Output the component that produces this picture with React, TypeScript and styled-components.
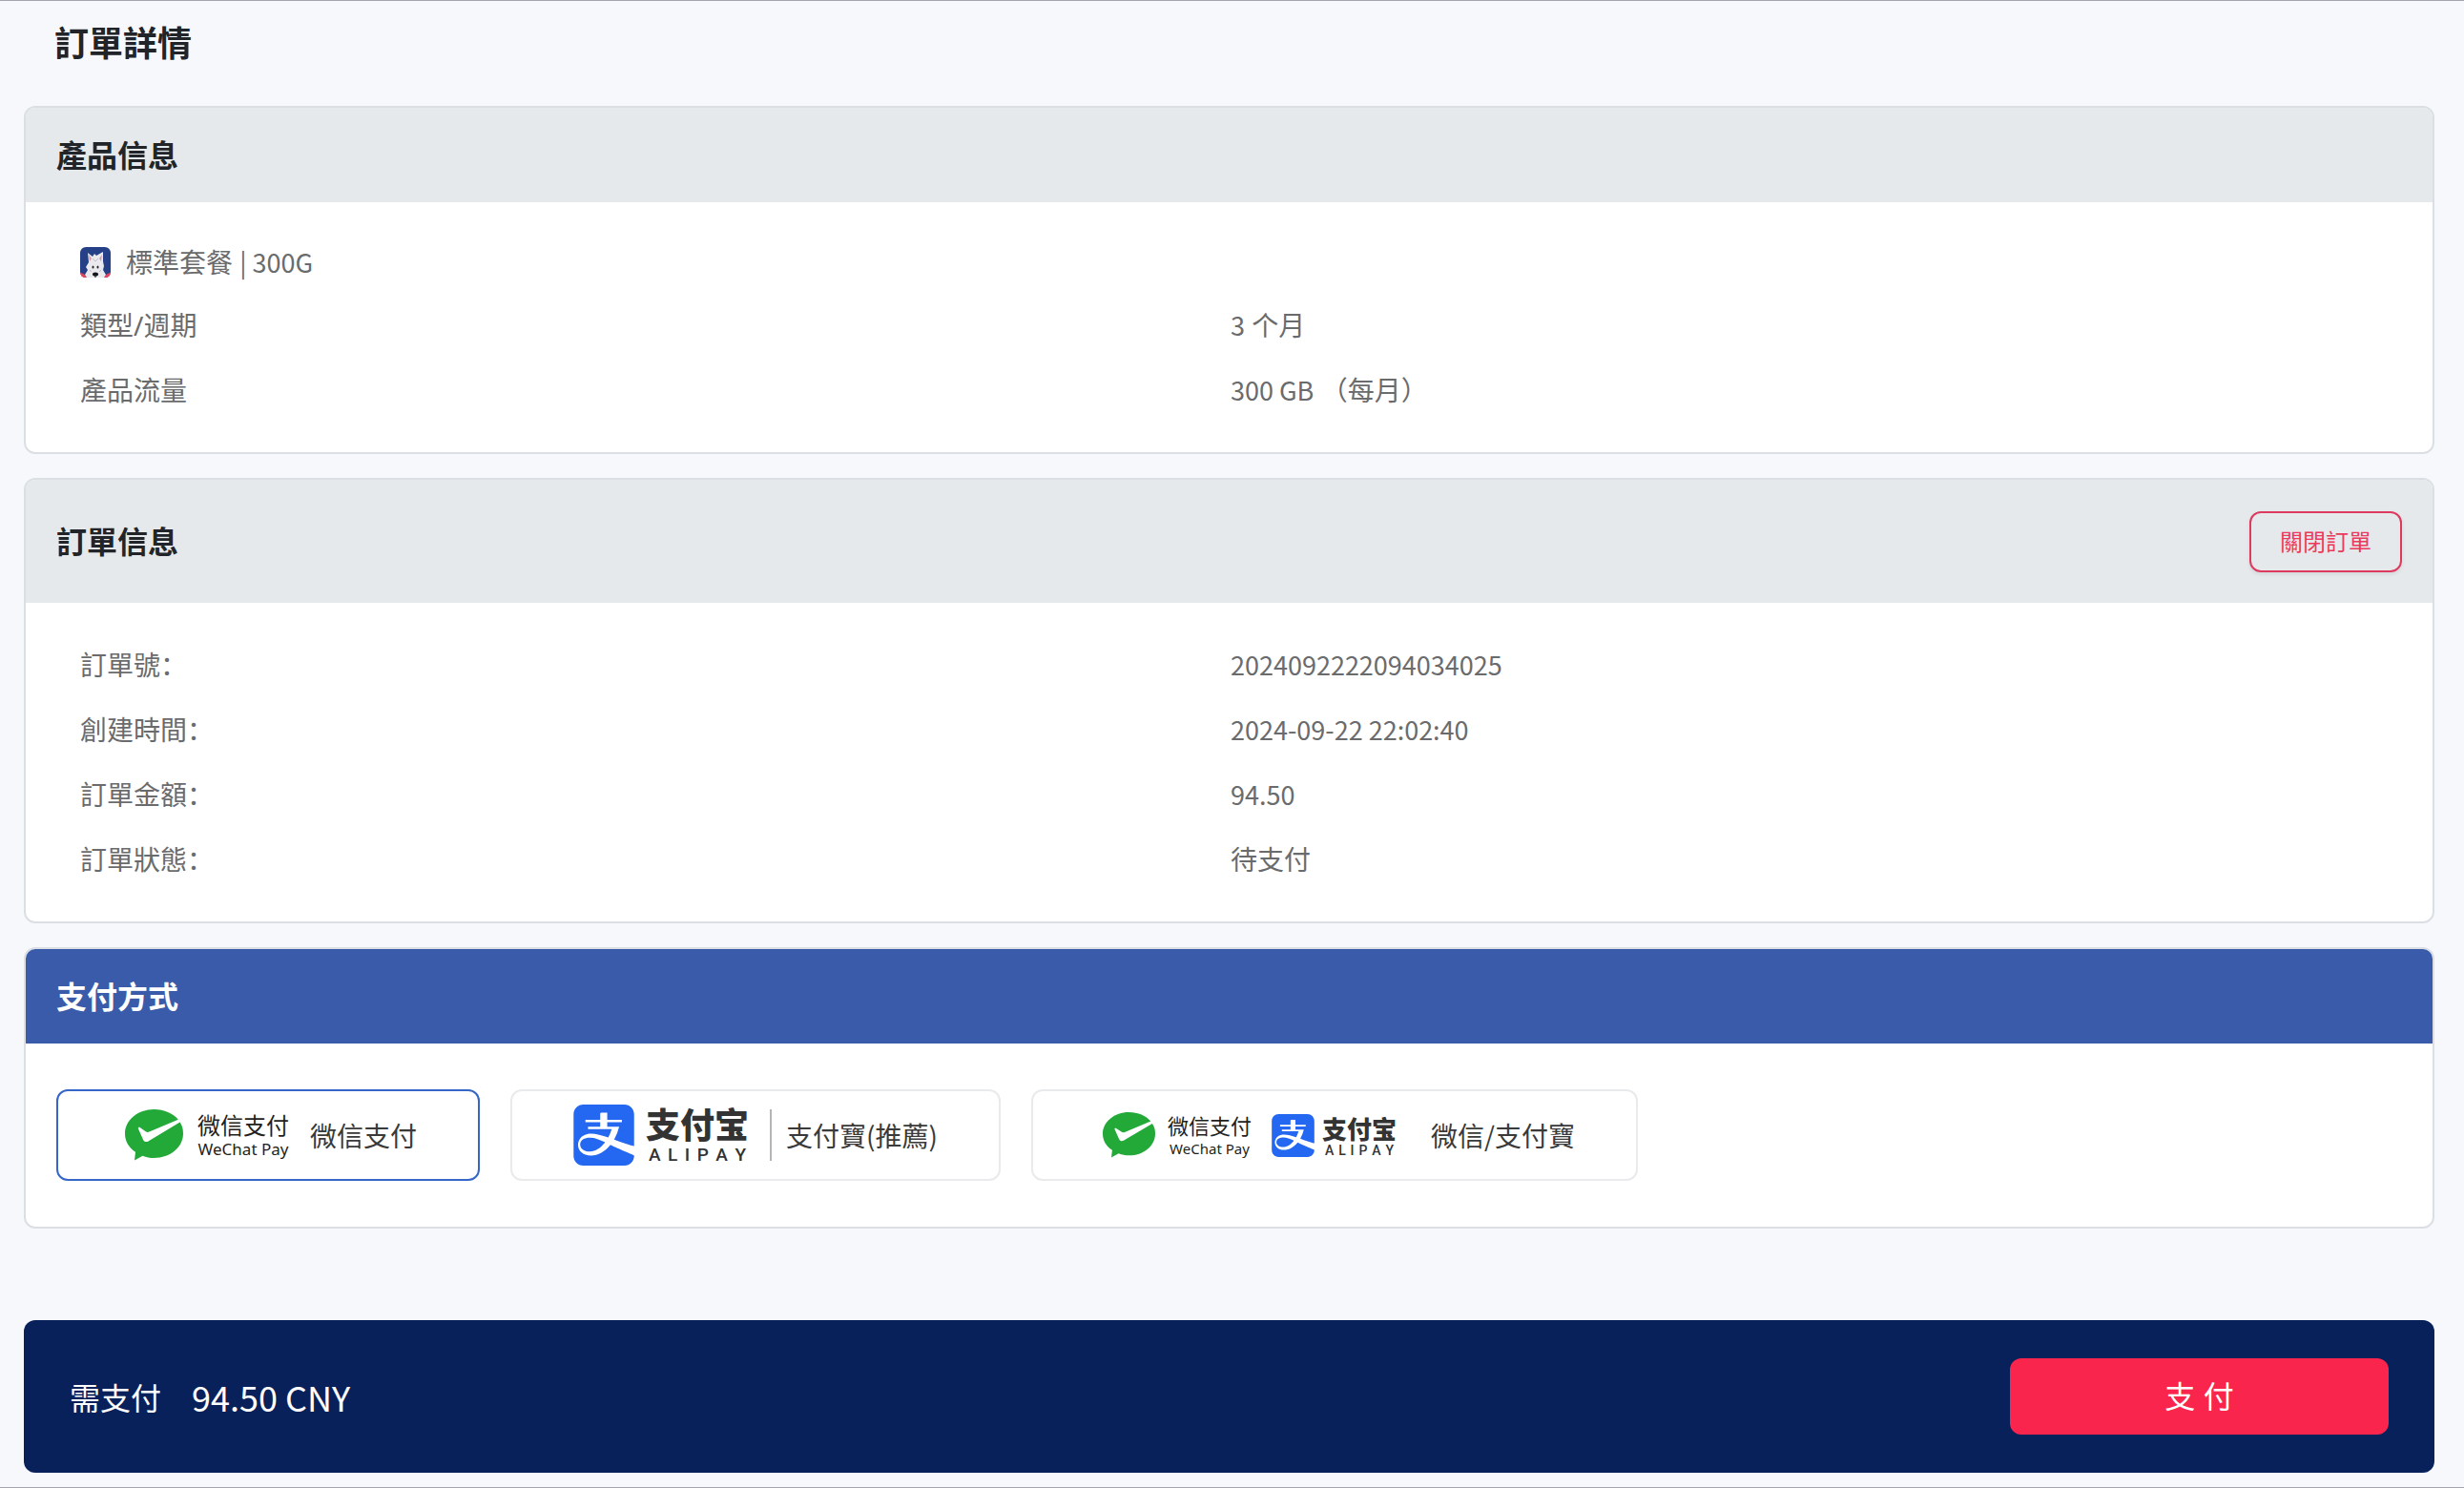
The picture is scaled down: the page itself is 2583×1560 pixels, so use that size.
import React, { useState } from "react";
import styled, { createGlobalStyle } from "styled-components";
import { SiAlipay } from "react-icons/si";

const cjkFirst = `"Noto Sans CJK SC", "Noto Sans", sans-serif`;
const latinFirst = `"Noto Sans", "Noto Sans CJK SC", sans-serif`;

const GlobalStyle = createGlobalStyle`
  *, *::before, *::after { box-sizing: border-box; }
  body {
    margin: 0;
    background: #f7f8fc;
    color: #212529;
    font-family: ${latinFirst};
    font-size: 28px;
    line-height: 40px;
  }
  button { font-family: inherit; cursor: pointer; }
`;

const Page = styled.main`
  display: flex;
  flex-direction: column;
  min-height: 100vh;
  padding: 0 31px 15px 25px;
  border: solid #a5a6ad;
  border-width: 1px 0;
`;

const Title = styled.h1`
  margin: 0;
  padding: 20px 32px 40px;
  font-size: 36px;
  line-height: 50px;
  font-weight: 700;
`;

const Cards = styled.div`
  display: flex;
  flex-direction: column;
  gap: 25px;
`;

const Card = styled.section`
  border: 2px solid #dbdfe3;
  border-radius: 12px;
  background: #fff;
  overflow: hidden;
`;

const CardHeader = styled.header<{ $accent?: boolean; $tall?: boolean }>`
  display: flex;
  align-items: center;
  justify-content: space-between;
  min-height: ${(p) => (p.$tall ? 129 : 99)}px;
  padding: 0 32px;
  background: ${(p) => (p.$accent ? "#3a5ba9" : "#e5e9eb")};
  color: ${(p) => (p.$accent ? "#fff" : "inherit")};
`;

const CardTitle = styled.h2`
  margin: 0;
  font-size: 32px;
  line-height: 44px;
  font-weight: 700;
`;

const CloseButton = styled.button`
  height: 64px;
  padding: 0 30px;
  border: 2px solid #de3a5f;
  border-radius: 12px;
  background: transparent;
  box-shadow: 0 2px 4px rgba(0, 0, 0, 0.08);
  color: #ec3a5d;
  font-size: 24px;
  line-height: 32px;
`;

const Details = styled.div`
  padding: 31px 54px 31px 57px;
  color: #6a6b6d;
`;

const Product = styled.div`
  display: flex;
  align-items: center;
  gap: 16px;
  height: 64px;
`;

const List = styled.dl`
  margin: 0;
`;

const Row = styled.div`
  display: grid;
  grid-template-columns: 1fr 1fr;
  align-items: center;
  height: 68px;

  dt, dd { margin: 0; }
`;

const Latin = styled.span`
  font-family: ${cjkFirst};
  font-size: 27px;
`;

const Options = styled.div`
  display: flex;
  flex-wrap: wrap;
  gap: 32px;
  padding: 48px 32px;
`;

const Option = styled.label<{ $selected: boolean }>`
  display: flex;
  align-items: center;
  height: 96px;
  padding: 0 64px;
  border: 2px solid ${(p) => (p.$selected ? "#3566c8" : "#e9eaeb")};
  border-radius: 12px;
  color: #3a3a3a;
  font-family: ${cjkFirst};
  cursor: pointer;
`;

const Radio = styled.input`
  position: absolute;
  opacity: 0;
  pointer-events: none;
`;

const Logo = styled.span<{ $gap: number; $before?: number; $after: number }>`
  display: flex;
  align-items: center;
  gap: ${(p) => p.$gap}px;
  margin-left: ${(p) => p.$before ?? 0}px;
  margin-right: ${(p) => p.$after}px;
  font-family: ${latinFirst};
`;

const WordMark = styled.span`
  display: flex;
  flex-direction: column;
  align-items: center;
  padding-top: 4px;
`;

const WeChatName = styled.span<{ $small?: boolean }>`
  color: #231f20;
  font-size: ${(p) => (p.$small ? 22 : 24)}px;
  line-height: ${(p) => (p.$small ? 24 : 26)}px;
`;

const WeChatLatin = styled.span<{ $small?: boolean }>`
  color: #231f20;
  font-size: ${(p) => (p.$small ? 15 : 17)}px;
  line-height: 24px;
`;

const AlipayName = styled.span<{ $small?: boolean }>`
  color: #333;
  font-size: ${(p) => (p.$small ? 26 : 36)}px;
  line-height: ${(p) => (p.$small ? 28 : 38)}px;
  font-weight: 900;
`;

const AlipayLatin = styled.span<{ $small?: boolean }>`
  display: flex;
  justify-content: space-between;
  align-self: stretch;
  padding: 0 3px;
  color: #333;
  font-family: Roboto, sans-serif;
  font-size: ${(p) => (p.$small ? 14 : 19)}px;
  line-height: ${(p) => (p.$small ? 16 : 24)}px;
  font-weight: 500;
`;

const Divider = styled.span`
  width: 2px;
  height: 54px;
  margin: 0 15px 0 22px;
  background: #b5b5b5;
`;

const PayBar = styled.footer`
  display: flex;
  align-items: center;
  justify-content: space-between;
  height: 160px;
  margin-top: 96px;
  padding: 0 48px;
  border-radius: 12px;
  background: #09215b;
  color: #fff;
`;

const Due = styled.div`
  display: flex;
  align-items: center;
  gap: 32px;
  font-family: ${cjkFirst};
  font-size: 32px;
  line-height: 48px;
`;

const Amount = styled.strong`
  font-size: 36px;
  font-weight: 400;
`;

const PayButton = styled.button`
  width: 397px;
  height: 80px;
  border: 0;
  border-radius: 12px;
  background: #fa254c;
  color: #fff;
  font-size: 32px;
  line-height: 48px;
`;

function DogIcon() {
  return (
    <svg width="32" height="32" viewBox="0 0 32 32" aria-hidden="true">
      <rect width="32" height="32" rx="6" fill="#254086" />
      <path d="M0 27q4 0 7 5H5Q1 32 0 27zM32 27q-4 0-7 5h2q4 0 5-5z" fill="#e0435a" />
      <path
        d="M8 6l5 4 2-3 2 2 7-4v10l1 5-1 4 3 5-2 3H7l-2-3 3-5-2-3 3-5z"
        fill="#e9e9ee"
      />
      <path d="M9 8l3 4-2 3zM23 8l-3 4 2 3z" fill="#d79aa6" />
      <path d="M13 12l3 3 3-3M10 24l2 2M22 24l-2 2" stroke="#bfc0ca" fill="none" />
      <ellipse cx="13.5" cy="21" rx="1" ry="1.6" fill="#222" />
      <ellipse cx="18.5" cy="21" rx="1" ry="1.6" fill="#222" />
      <ellipse cx="16" cy="28.5" rx="3" ry="2" fill="#16161a" />
      <path d="M16 30v2" stroke="#16161a" />
    </svg>
  );
}

function WeChatIcon({ width, height }: { width: number; height: number }) {
  return (
    <svg width={width} height={height} viewBox="0 0 61 54" preserveAspectRatio="none" aria-hidden="true">
      <path
        d="M30.500 0C13.600 0 0 11.400 0 25.500c0 8 4.200 14.700 11 19.300L10 53.500l8.500-4.800c3.800 1.500 7.800 2.300 12 2.300C47.400 51 61 39.600 61 25.500c0-5.300-1.200-8.700-3.400-11.900L26.500 32.200c-3.600 2.800-6.200 2.500-7.600-.7l-5-11.300c-.4-1.300.7-1.800 1.800-1.200l6 4.200c1.200.8 2.400.9 3.800.3L55.800 10.700C50.300 4.200 41 0 30.500 0z"
        fill="#22a938"
      />
    </svg>
  );
}

function WeChatLogo({ small }: { small?: boolean }) {
  return (
    <Logo $gap={small ? 13 : 15} $before={small ? 9 : 6} $after={small ? 21 : 22}>
      <WeChatIcon width={small ? 55 : 61} height={small ? 48 : 54} />
      <WordMark>
        <WeChatName $small={small}>微信支付</WeChatName>
        <WeChatLatin $small={small}>WeChat Pay</WeChatLatin>
      </WordMark>
    </Logo>
  );
}

function AlipayLogo({ small }: { small?: boolean }) {
  return (
    <Logo $gap={small ? 8 : 12} $after={small ? 36 : 0}>
      <SiAlipay size={small ? 45 : 64} color="#2468f2" aria-hidden="true" />
      <WordMark>
        <AlipayName $small={small}>支付宝</AlipayName>
        <AlipayLatin $small={small}>
          {"ALIPAY".split("").map((c, i) => (
            <span key={i}>{c}</span>
          ))}
        </AlipayLatin>
      </WordMark>
    </Logo>
  );
}

const orderRows = [
  { label: "訂單號：", value: <Latin>2024092222094034025</Latin> },
  { label: "創建時間：", value: <Latin>2024-09-22 22:02:40</Latin> },
  { label: "訂單金額：", value: <Latin>94.50</Latin> },
  { label: "訂單狀態：", value: "待支付" },
];

export default function App() {
  const [method, setMethod] = useState("wechat");

  const methods = [
    { id: "wechat", label: "微信支付", logo: <WeChatLogo /> },
    { id: "alipay", label: "支付寶(推薦)", logo: <><AlipayLogo /><Divider /></> },
    { id: "both", label: "微信/支付寶", logo: <><WeChatLogo small /><AlipayLogo small /></> },
  ];

  return (
    <>
      <GlobalStyle />
      <Page lang="zh-Hans">
        <Title>訂單詳情</Title>
        <Cards>
          <Card>
            <CardHeader>
              <CardTitle>產品信息</CardTitle>
            </CardHeader>
            <Details>
              <Product>
                <DogIcon />
                <span>標準套餐 <Latin>| 300G</Latin></span>
              </Product>
              <List>
                <Row>
                  <dt>類型/週期</dt>
                  <dd><Latin>3</Latin> 个月</dd>
                </Row>
                <Row>
                  <dt>產品流量</dt>
                  <dd><Latin>300 GB</Latin> （每月）</dd>
                </Row>
              </List>
            </Details>
          </Card>

          <Card>
            <CardHeader $tall>
              <CardTitle>訂單信息</CardTitle>
              <CloseButton type="button">關閉訂單</CloseButton>
            </CardHeader>
            <Details>
              <List>
                {orderRows.map((row) => (
                  <Row key={row.label}>
                    <dt>{row.label}</dt>
                    <dd>{row.value}</dd>
                  </Row>
                ))}
              </List>
            </Details>
          </Card>

          <Card>
            <CardHeader $accent>
              <CardTitle>支付方式</CardTitle>
            </CardHeader>
            <Options role="radiogroup" aria-label="支付方式">
              {methods.map((m) => (
                <Option key={m.id} $selected={method === m.id}>
                  <Radio
                    type="radio"
                    name="method"
                    value={m.id}
                    checked={method === m.id}
                    onChange={() => setMethod(m.id)}
                  />
                  {m.logo}
                  <span>{m.label}</span>
                </Option>
              ))}
            </Options>
          </Card>
        </Cards>

        <PayBar>
          <Due>
            <span>需支付</span>
            <Amount>94.50 CNY</Amount>
          </Due>
          <PayButton type="button">支 付</PayButton>
        </PayBar>
      </Page>
    </>
  );
}
